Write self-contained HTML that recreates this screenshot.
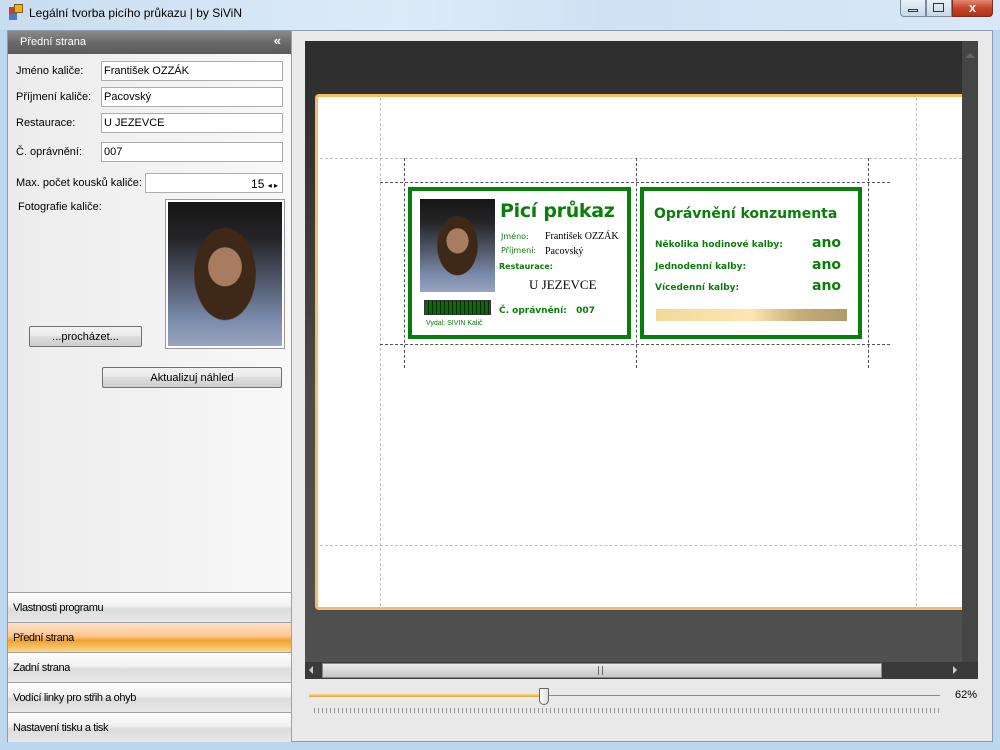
<!DOCTYPE html>
<html><head><meta charset="utf-8"><style>
*{margin:0;padding:0;box-sizing:border-box}
body{width:1000px;height:750px;overflow:hidden;background:#bcd6ee;font-family:"Liberation Sans",sans-serif;font-size:11px;color:#000;position:relative}
.a{position:absolute}
.title{left:0;top:0;width:1000px;height:30px;background:linear-gradient(90deg,#c9ddf0,#dcebf8 40%,#cfe2f4 60%,#d8e8f6);}
.client{left:7px;top:30px;width:986px;height:712px;background:#e9e9e9;border:1px solid #8a9bb0}
.inp{position:absolute;background:#fff;border:1px solid #abadb3;height:20px;padding:3px 0 0 2px;font-size:11px}
.lbl{position:absolute;font-size:11px}
.btn{position:absolute;border:1px solid #707070;border-radius:2px;background:linear-gradient(#f2f2f2,#ebebeb 45%,#dddddd 50%,#cfcfcf);text-align:center;font-size:11px;padding-top:4px}
.nav{position:absolute;left:8px;width:283px;height:30px;border-top:1px solid #a0a0a0;background:linear-gradient(#fefefe,#f0f0f0 45%,#dcdcdc 55%,#e8e8e8);font-family:"Liberation Sans Narrow","Liberation Sans",sans-serif;font-size:11px;padding:9px 0 0 5px;letter-spacing:-0.4px}
.g{color:#0a7d0a;font-family:"DejaVu Sans",sans-serif;font-weight:bold}
.dh{position:absolute;height:0;border-top:1px dashed #c0c0c0}
.dv{position:absolute;width:0;border-left:1px dashed #c0c0c0}
.ddh{position:absolute;height:0;border-top:1px dashed #555}
.ddv{position:absolute;width:0;border-left:1px dashed #555}
.ph{background:radial-gradient(ellipse 24% 22% at 50% 45%,#a87c60 60%,transparent 63%),radial-gradient(ellipse 38% 45% at 50% 50%,#3e2818 70%,transparent 72%),linear-gradient(#151515 0,#252528 25%,#50586a 55%,#7888a8 80%,#98a4c0)}
</style></head><body>
<div class="a title"></div>
<div class="a" style="left:9px;top:7px;width:8px;height:8px;background:#d63a2a"></div>
<div class="a" style="left:14px;top:4px;width:9px;height:9px;background:#f0b020;border:1px solid #806010"></div>
<div class="a" style="left:9px;top:14px;width:8px;height:6px;background:#4a7ac0"></div>
<div class="a" style="left:29px;top:6px;font-size:12px">Legální tvorba picího průkazu | by SiViN</div>
<div class="a" style="left:900px;top:0;width:26px;height:17px;border:1px solid #7a8a9a;border-top:0;border-radius:0 0 0 4px;background:linear-gradient(#e8f0f8,#c8d8e8)"></div>
<div class="a" style="left:908px;top:9px;width:10px;height:3px;border:1px solid #333"></div>
<div class="a" style="left:926px;top:0;width:26px;height:17px;border:1px solid #7a8a9a;border-top:0;background:linear-gradient(#e8f0f8,#c8d8e8)"></div>
<div class="a" style="left:933px;top:3px;width:11px;height:9px;border:1px solid #333"></div>
<div class="a" style="left:952px;top:0;width:41px;height:17px;border:1px solid #7a3020;border-top:0;border-radius:0 0 4px 0;background:linear-gradient(#e08a70,#c8452a 50%,#b03018);color:#fff;font-weight:bold;text-align:center;font-size:13px;line-height:15px">x</div>

<div class="a client"></div>
<div class="a" style="left:8px;top:31px;width:284px;height:711px;background:linear-gradient(90deg,#ececec,#f8f8f8);border-right:1px solid #a0a0a0"></div>
<div class="a" style="left:8px;top:31px;width:283px;height:23px;background:linear-gradient(#8a8a8a,#6a6a6a 50%,#5a5a5a);color:#fff;padding:5px 0 0 12px;font-size:11px">Přední strana<span style="position:absolute;right:10px;top:2px;font-weight:bold;font-size:13px">«</span></div>
<div class="lbl" style="left:16px;top:65px">Jméno kaliče:</div><div class="inp" style="left:101px;top:61px;width:182px">František OZZÁK</div>
<div class="lbl" style="left:16px;top:91px">Příjmení kaliče:</div><div class="inp" style="left:101px;top:87px;width:182px">Pacovský</div>
<div class="lbl" style="left:16px;top:117px">Restaurace:</div><div class="inp" style="left:101px;top:113px;width:182px">U JEZEVCE</div>
<div class="lbl" style="left:16px;top:146px">Č. oprávnění:</div><div class="inp" style="left:101px;top:142px;width:182px">007</div>
<div class="lbl" style="left:16px;top:177px">Max. počet kousků kaliče:</div><div class="inp" style="left:145px;top:173px;width:138px;text-align:right;padding-right:4px;font-size:12px">15 <span style="font-size:8px">◂ ▸</span></div>
<div class="lbl" style="left:18px;top:201px">Fotografie kaliče:</div>
<div class="a" style="left:165px;top:199px;width:120px;height:150px;border:1px solid #999;background:#fff;padding:2px">
<div class="ph" style="width:114px;height:144px"></div></div>
<div class="btn" style="left:29px;top:326px;width:113px;height:21px">...procházet...</div>
<div class="btn" style="left:102px;top:367px;width:180px;height:21px">Aktualizuj náhled</div>

<div class="nav" style="top:592px">Vlastnosti programu</div>
<div class="nav" style="top:622px;background:linear-gradient(#fde0c8,#fcc890 45%,#f0a030 60%,#fbd88a)">Přední strana</div>
<div class="nav" style="top:652px">Zadní strana</div>
<div class="nav" style="top:682px">Vodící linky pro střih a ohyb</div>
<div class="nav" style="top:712px">Nastavení tisku a tisk</div>

<div class="a" style="left:305px;top:41px;width:657px;height:621px;background:linear-gradient(#2e2e2e 0,#303030 10%,#3a3a3a 30%,#4c4c4c 60%,#505050)"></div>
<div class="a" style="left:962px;top:41px;width:16px;height:621px;background:#454545"></div>
<div class="a" style="left:965px;top:48px;width:0;height:0;border:5px solid transparent;border-bottom-color:#666"></div>
<div class="a" style="left:305px;top:662px;width:673px;height:17px;background:#3a3a3a"></div>
<div class="a" style="left:322px;top:663px;width:560px;height:15px;background:linear-gradient(#ececec,#d8d8d8 50%,#c8c8c8);border:1px solid #888"></div>
<div class="a" style="left:598px;top:666px;width:5px;height:9px;border-left:1px solid #666;border-right:1px solid #666"></div>
<div class="a" style="left:309px;top:666px;border:4px solid transparent;border-right-color:#ccc;border-width:4px 4px 4px 0"></div>
<div class="a" style="left:953px;top:666px;border:4px solid transparent;border-left-color:#ccc;border-width:4px 0 4px 4px"></div>

<div class="a" style="left:315px;top:94px;width:647px;height:516px;background:#fff;border:3px solid #f2bd68;border-right:0;border-radius:4px 0 0 4px"></div>
<div class="dh" style="left:320px;top:158px;width:642px"></div>
<div class="dh" style="left:320px;top:545px;width:642px"></div>
<div class="dv" style="left:380px;top:98px;height:508px"></div>
<div class="dv" style="left:916px;top:98px;height:508px"></div>
<div class="ddh" style="left:380px;top:182px;width:510px"></div>
<div class="ddh" style="left:380px;top:344px;width:510px"></div>
<div class="ddv" style="left:404px;top:158px;height:210px"></div>
<div class="ddv" style="left:636px;top:158px;height:210px"></div>
<div class="ddv" style="left:868px;top:158px;height:210px"></div>

<div class="a" style="left:408px;top:187px;width:223px;height:152px;border:4px solid #0a7d0a;background:#fff"></div>
<div class="a ph" style="left:420px;top:199px;width:75px;height:93px"></div>
<div class="a g" style="left:500px;top:200px;font-size:19px;letter-spacing:-0.3px">Picí průkaz</div>
<div class="a g" style="left:501px;top:232px;font-size:8px;font-weight:normal">Jméno:</div>
<div class="a" style="left:545px;top:231px;font-family:'Liberation Serif',serif;font-size:10px">František OZZÁK</div>
<div class="a g" style="left:501px;top:246px;font-size:8px;font-weight:normal">Příjmení:</div>
<div class="a" style="left:545px;top:246px;font-family:'Liberation Serif',serif;font-size:10px">Pacovský</div>
<div class="a g" style="left:499px;top:262px;font-size:8px">Restaurace:</div>
<div class="a" style="left:529px;top:277px;font-family:'Liberation Serif',serif;font-size:13px">U JEZEVCE</div>
<div class="a" style="left:424px;top:300px;width:67px;height:15px;border:1px solid #333;background:repeating-linear-gradient(90deg,#0a6a0a 0 3px,#002800 3px 4px)"></div>
<div class="a" style="left:426px;top:320px;font-size:7px;color:#0a7d0a">Vydal: SIVIN Kalič</div>
<div class="a g" style="left:499px;top:306px;font-size:9px">Č. oprávnění:&nbsp;&nbsp; 007</div>

<div class="a" style="left:640px;top:187px;width:222px;height:152px;border:4px solid #0a7d0a;background:#fff"></div>
<div class="a g" style="left:654px;top:206px;font-size:14px;font-weight:600">Oprávnění konzumenta</div>
<div class="a g" style="left:655px;top:240px;font-size:9px">Několika hodinové kalby:</div>
<div class="a g" style="left:655px;top:262px;font-size:9px">Jednodenní kalby:</div>
<div class="a g" style="left:655px;top:283px;font-size:9px">Vícedenní kalby:</div>
<div class="a g" style="left:812px;top:235px;font-size:14px">ano</div>
<div class="a g" style="left:812px;top:257px;font-size:14px">ano</div>
<div class="a g" style="left:812px;top:278px;font-size:14px">ano</div>
<div class="a" style="left:656px;top:309px;width:191px;height:12px;background:linear-gradient(90deg,#f4d89a,#fce6b0 50%,#c8ac78 75%,#b09a6a)"></div>

<div class="a" style="left:309px;top:695px;width:631px;height:1px;background:#888"></div>
<div class="a" style="left:309px;top:694px;width:235px;height:3px;background:linear-gradient(#f8d898,#e8a838)"></div>
<div class="a" style="left:539px;top:688px;width:10px;height:17px;border:1px solid #666;border-radius:1px 1px 5px 5px;background:linear-gradient(90deg,#fff,#ddd)"></div>
<div class="a" style="left:314px;top:708px;width:626px;height:5px;background:repeating-linear-gradient(90deg,#999 0 1px,transparent 1px 4px)"></div>
<div class="a" style="left:955px;top:689px;font-size:11px">62%</div>
</body></html>
